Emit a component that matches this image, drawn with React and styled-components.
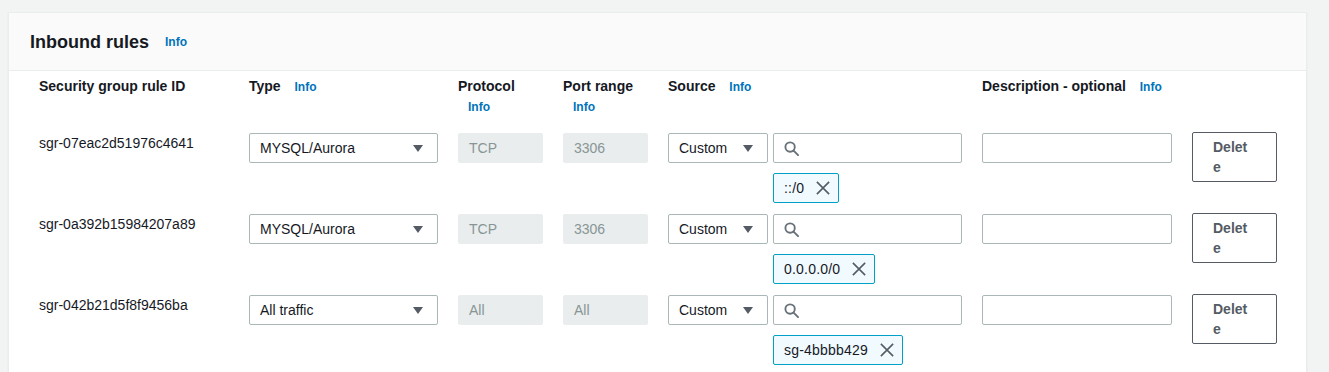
import React from "react";
import styled, { createGlobalStyle } from "styled-components";

const Global = createGlobalStyle`
  html, body {
    margin: 0;
    background: #f2f3f3;
  }
  body {
    padding: 12px 22px 0 8px;
    font-family: "Liberation Sans", Arial, sans-serif;
    color: #16191f;
  }
`;

const Card = styled.div`
  background: #fff;
  border: 1px solid #eaeded;
  box-shadow: 0 1px 1px 0 rgba(0, 28, 36, 0.1);
  min-height: 400px;
`;

const CardHeader = styled.div`
  background: #fafafa;
  border-bottom: 1px solid #eaeded;
  box-sizing: border-box;
  height: 58px;
  padding: 1px 21px 0;
  display: flex;
  align-items: center;
`;

const Title = styled.h2`
  margin: 0;
  font-size: 18px;
  font-weight: 700;
  line-height: 22px;
`;

const Info = styled.a`
  display: inline-block;
  margin-left: ${(p) => p.$gap || 10}px;
  font-size: 12px;
  font-weight: 700;
  color: #0073bb;
  text-decoration: none;
  line-height: 21px;
`;

const Table = styled.div`
  padding: 5px 30px 0 30px;
  display: grid;
  grid-template-columns: 190px 189px 85px 85px 294px 190px 85px;
  column-gap: 20px;
`;

const Heading = styled.div`
  font-size: 14px;
  font-weight: 700;
  line-height: 20px;
  margin-bottom: 15px;
`;

const RuleId = styled.div`
  font-size: 14px;
  line-height: 20px;
  padding-top: 0;
`;

const Cell = styled.div`
  margin-bottom: 11px;
`;

const fieldBase = `
  box-sizing: border-box;
  height: 30px;
  border-radius: 2px;
  font-size: 14px;
  line-height: 20px;
  padding: 4px 10px;
  display: flex;
  align-items: center;
`;

const Select = styled.div`
  ${fieldBase}
  border: 1px solid #aab7b8;
  background: #fff;
  justify-content: space-between;
  width: ${(p) => p.$width}px;
  padding-right: 14px;
`;

const Caret = styled.span`
  width: 0;
  height: 0;
  border-left: 5px solid transparent;
  border-right: 5px solid transparent;
  border-top: 7px solid #545b64;
`;

const Disabled = styled.div`
  ${fieldBase}
  border: 1px solid #eaeded;
  background: #eaeded;
  color: #879596;
`;

const Input = styled.div`
  ${fieldBase}
  border: 1px solid #aab7b8;
  background: #fff;
`;

const SourceRow = styled.div`
  display: flex;
  gap: 5px;
`;

const SearchCol = styled.div`
  flex: 1;
  display: flex;
  flex-direction: column;
  align-items: flex-start;
  gap: 10px;
`;

const SearchBox = styled(Input)`
  width: 100%;
  padding-left: 10px;
`;

const Token = styled.div`
  ${fieldBase}
  border: 1px solid #00a1c9;
  background: #f1faff;
  padding: 4px 8px 4px 10px;
  gap: 12px;
  letter-spacing: 0.2px;
`;

const DeleteButton = styled.button`
  box-sizing: border-box;
  width: 85px;
  margin-top: -1px;
  padding: 4px 24px 4px 20px;
  border: 1px solid #545b64;
  border-radius: 2px;
  background: #fff;
  color: #545b64;
  font-family: inherit;
  font-size: 14px;
  font-weight: 700;
  line-height: 20px;
  text-align: left;
  word-break: break-all;
`;

const SearchIcon = () => (
  <svg width="15" height="15" viewBox="0 0 16 16" fill="none" stroke="#687078" strokeWidth="2">
    <circle cx="6.5" cy="6.5" r="5" />
    <path d="M10.2 10.2 L15 15" strokeLinecap="round" />
  </svg>
);

const CloseIcon = () => (
  <svg width="14" height="14" viewBox="0 0 16 16" fill="none" stroke="#545b64" strokeWidth="1.8">
    <path d="M1 1 L15 15 M15 1 L1 15" />
  </svg>
);

const rules = [
  { id: "sgr-07eac2d51976c4641", type: "MYSQL/Aurora", protocol: "TCP", port: "3306", token: "::/0" },
  { id: "sgr-0a392b15984207a89", type: "MYSQL/Aurora", protocol: "TCP", port: "3306", token: "0.0.0.0/0" },
  { id: "sgr-042b21d5f8f9456ba", type: "All traffic", protocol: "All", port: "All", token: "sg-4bbbb429" },
];

export default function App() {
  return (
    <>
      <Global />
      <Card>
        <CardHeader>
          <Title>Inbound rules</Title>
          <Info $gap={16}>Info</Info>
        </CardHeader>
        <Table>
          <Heading>Security group rule ID</Heading>
          <Heading>
            Type <Info>Info</Info>
          </Heading>
          <Heading>
            Protocol <Info>Info</Info>
          </Heading>
          <Heading>
            Port range <Info>Info</Info>
          </Heading>
          <Heading>
            Source <Info>Info</Info>
          </Heading>
          <Heading>
            Description - optional <Info>Info</Info>
          </Heading>
          <Heading />

          {rules.map((r) => (
            <React.Fragment key={r.id}>
              <RuleId>{r.id}</RuleId>
              <Cell>
                <Select $width={189}>
                  {r.type}
                  <Caret />
                </Select>
              </Cell>
              <Cell>
                <Disabled>{r.protocol}</Disabled>
              </Cell>
              <Cell>
                <Disabled>{r.port}</Disabled>
              </Cell>
              <Cell>
                <SourceRow>
                  <Select $width={100}>
                    Custom
                    <Caret />
                  </Select>
                  <SearchCol>
                    <SearchBox>
                      <SearchIcon />
                    </SearchBox>
                    <Token>
                      {r.token}
                      <CloseIcon />
                    </Token>
                  </SearchCol>
                </SourceRow>
              </Cell>
              <Cell>
                <Input />
              </Cell>
              <Cell>
                <DeleteButton>Delete</DeleteButton>
              </Cell>
            </React.Fragment>
          ))}
        </Table>
      </Card>
    </>
  );
}
